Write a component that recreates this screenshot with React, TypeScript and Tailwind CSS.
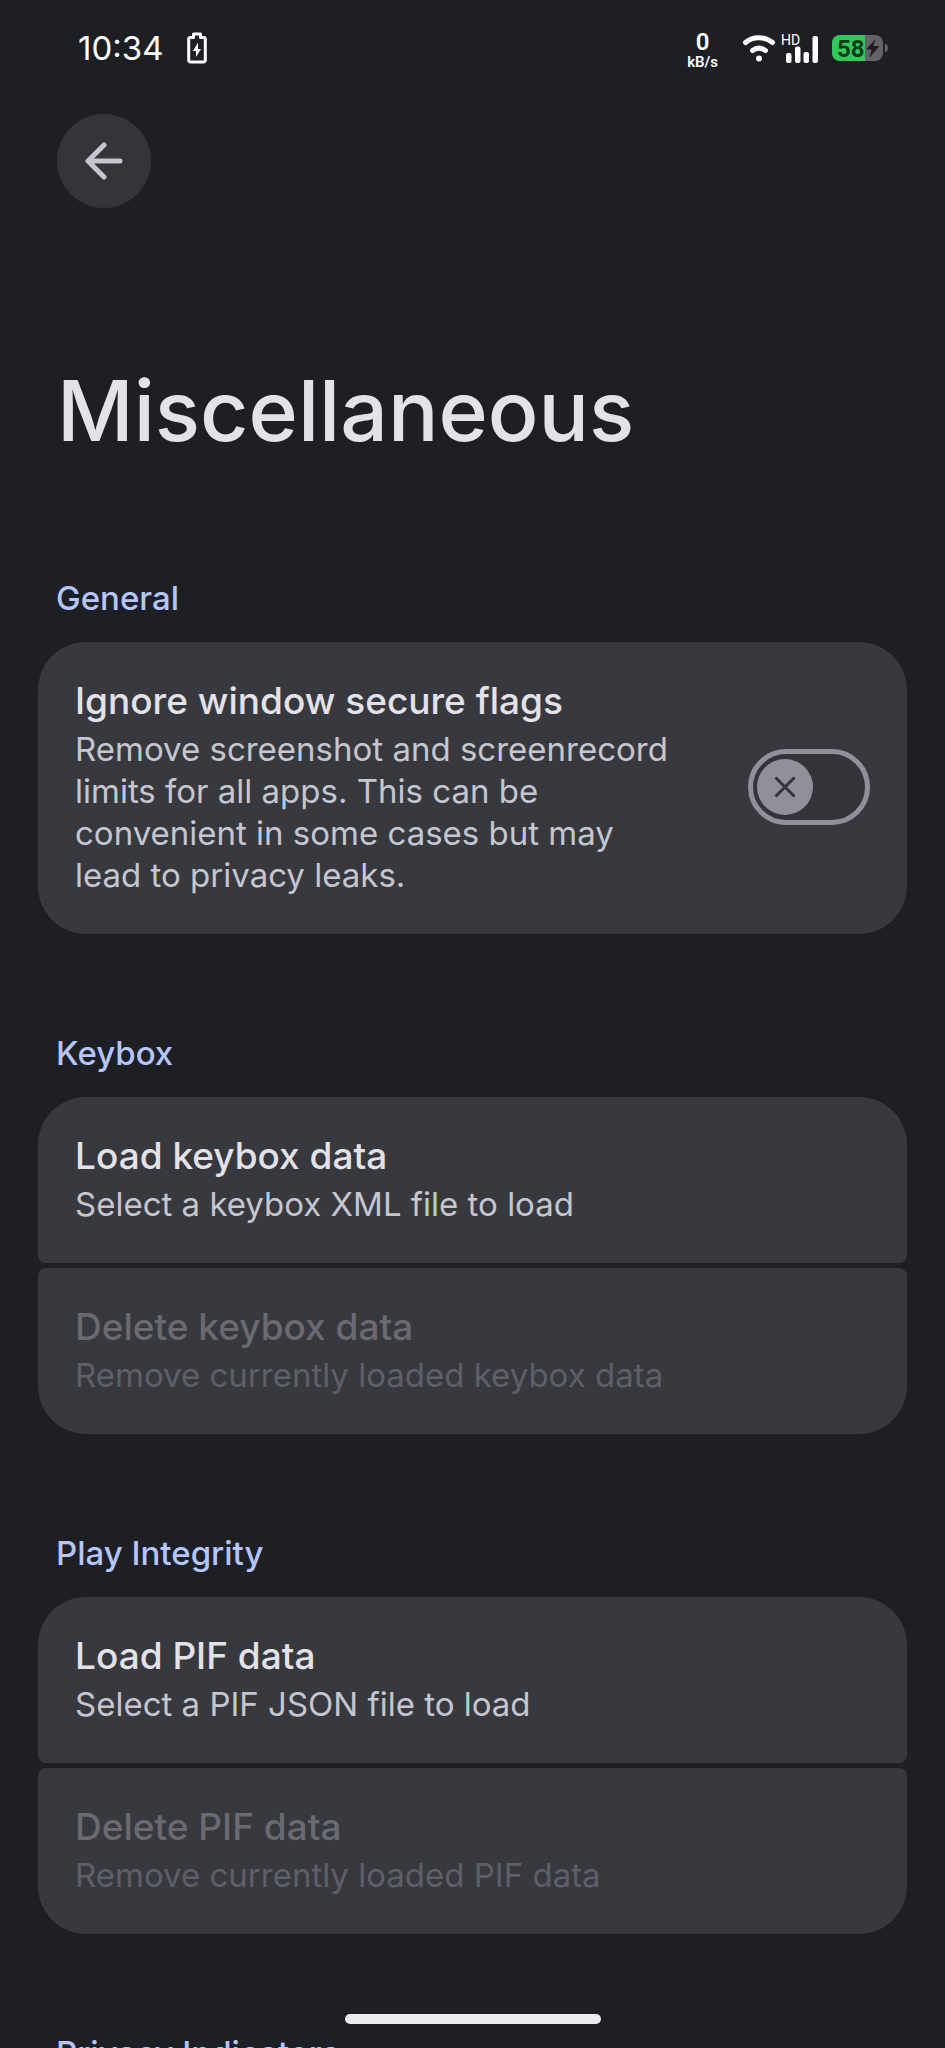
import React from "react";
import { clsx } from "clsx";

type Preference = {
  title: string;
  summary: string;
  disabled?: boolean;
};

const keyboxItems: Preference[] = [
  { title: "Load keybox data", summary: "Select a keybox XML file to load" },
  {
    title: "Delete keybox data",
    summary: "Remove currently loaded keybox data",
    disabled: true,
  },
];

const integrityItems: Preference[] = [
  { title: "Load PIF data", summary: "Select a PIF JSON file to load" },
  {
    title: "Delete PIF data",
    summary: "Remove currently loaded PIF data",
    disabled: true,
  },
];

const StatusBar: React.FC = () => (
  <div className="flex h-24 shrink-0 items-center justify-between pl-[78px] pr-[56px] text-white">
    <div className="flex items-center gap-6">
      <span className="text-[33px] leading-10">10:34</span>
      <svg width="20" height="32" viewBox="0 0 20 32" fill="none">
        <path
          d="M6.5 2h7v3.5h3a1.8 1.8 0 0 1 1.8 1.8v20.9a1.8 1.8 0 0 1-1.8 1.8h-13a1.8 1.8 0 0 1-1.8-1.8V7.3a1.8 1.8 0 0 1 1.8-1.8h3z"
          stroke="currentColor"
          strokeWidth="3"
          strokeLinejoin="round"
        />
        <path d="M11 10.5l-5 8.500h3v6l5-8h-3z" fill="currentColor" />
      </svg>
    </div>

    <div className="flex items-center font-['Roboto',sans-serif]">
      <div className="mr-6 flex flex-col items-center pt-1 font-semibold">
        <span className="text-2xl leading-6">0</span>
        <span className="text-[15px] leading-4">kB/s</span>
      </div>

      {/* Wi-Fi */}
      <svg width="34" height="28" viewBox="0 0 34 28" fill="none" className="mr-1.5">
        <path
          d="M3.5 8.5C11 2.2 23 2.2 30.5 8.5"
          stroke="currentColor"
          strokeWidth="5"
          strokeLinecap="round"
        />
        <path
          d="M10.500 16.500c4-3 9-3 13 0"
          stroke="currentColor"
          strokeWidth="5"
          strokeLinecap="round"
        />
        <circle cx="17" cy="24.500" r="3" fill="currentColor" />
      </svg>

      {/* Mobile signal */}
      <svg width="36" height="30" viewBox="0 0 36 30" className="mr-3.5 overflow-visible">
        <g fill="currentColor">
          <rect x="4" y="20" width="5.5" height="10" rx="2" />
          <rect x="13" y="13.500" width="5.5" height="16.500" rx="2" />
          <rect x="21.500" y="19" width="5.5" height="11" rx="2" />
          <rect x="30.5" y="3" width="5.5" height="27" rx="2" />
          <text x="-1" y="12" fontSize="14">
            HD
          </text>
        </g>
      </svg>

      {/* Battery */}
      <svg width="57" height="28" viewBox="0 0 57 28">
        <defs>
          <clipPath id="battery">
            <rect x="0" y="1" width="51" height="26" rx="8" />
          </clipPath>
        </defs>
        <g clipPath="url(#battery)">
          <rect width="51" height="28" fill="#64636a" />
          <rect width="33" height="28" fill="#34c759" />
        </g>
        <path d="M53 9.500c4 1.500 4 7.500 0 9z" fill="#64636a" />
        <path d="M43.5 5L34 15.5h5.5L37.5 23.5l10-11.5h-6z" fill="#1e1f24" />
        <text x="5" y="22.5" fontSize="24" fontWeight="700" fill="#0c3a1a">
          58
        </text>
      </svg>
    </div>
  </div>
);

const Section: React.FC<{ title: string; children?: React.ReactNode }> = ({
  title,
  children,
}) => (
  <section className="mb-[98px]">
    <h2 className="mb-[23px] px-[18px] text-[33px] font-medium leading-[42px] text-[#b4c5ff]">
      {title}
    </h2>
    <div className="flex flex-col gap-[5px]">{children}</div>
  </section>
);

const PreferenceGroup: React.FC<{ items: Preference[] }> = ({ items }) => (
  <>
    {items.map((item) => (
      <button
        key={item.title}
        type="button"
        disabled={item.disabled}
        className="rounded-lg bg-[#38393f] px-[37px] pb-[38px] pt-9 text-left first:rounded-t-[48px] last:rounded-b-[48px]"
      >
        <span
          className={clsx(
            "block text-[37px] font-medium leading-[46px]",
            item.disabled ? "text-[#6a6a70]" : "text-[#e3e2e9]"
          )}
        >
          {item.title}
        </span>
        <span
          className={clsx(
            "mt-1 block text-[33px] leading-[42px]",
            item.disabled ? "text-[#5e5f68]" : "text-[#c5c6d0]"
          )}
        >
          {item.summary}
        </span>
      </button>
    ))}
  </>
);

const App: React.FC = () => {
  const [ignoreFlags, setIgnoreFlags] = React.useState(false);

  return (
    <div className="relative flex h-screen flex-col overflow-hidden bg-[#1e1f24] font-['Inter',sans-serif]">
      <StatusBar />

      <header className="shrink-0 px-[57px] pt-[18px]">
        <button
          type="button"
          aria-label="Back"
          className="flex size-[94px] items-center justify-center rounded-full bg-[#343539] text-[#c5c6d0]"
        >
          <svg width="38" height="38" viewBox="0 0 38 38" fill="none">
            <path
              d="M35 19H4M19 3L3 19l16 16"
              stroke="currentColor"
              strokeWidth="5"
              strokeLinecap="round"
              strokeLinejoin="round"
            />
          </svg>
        </button>
        <h1 className="mb-[113px] mt-[150px] text-[84px] font-medium leading-[106px] text-[#e3e2e9]">
          Miscellaneous
        </h1>
      </header>

      <main className="px-[38px]">
        <Section title="General">
          <label className="flex items-center justify-between rounded-[48px] bg-[#38393f] px-[37px] pb-[38px] pt-9">
            <span className="max-w-[600px]">
              <span className="block text-[37px] font-medium leading-[46px] text-[#e3e2e9]">
                Ignore window secure flags
              </span>
              <span className="mt-1 block text-[33px] leading-[42px] text-[#c5c6d0]">
                Remove screenshot and screenrecord limits for all apps. This can
                be convenient in some cases but may lead to privacy leaks.
              </span>
            </span>
            <input
              type="checkbox"
              role="switch"
              className="peer sr-only"
              checked={ignoreFlags}
              onChange={(e) => setIgnoreFlags(e.target.checked)}
            />
            <span className="flex h-[76px] w-[122px] shrink-0 items-center rounded-full border-5 border-[#90909a] bg-[#33343a] px-1 peer-checked:justify-end">
              <span className="flex size-14 items-center justify-center rounded-full bg-[#90909a]">
                <svg width="22" height="22" viewBox="0 0 22 22">
                  <path d="M1.5 1.5l19 19M20.5 1.5l-19 19" stroke="#33343a" strokeWidth="3" />
                </svg>
              </span>
            </span>
          </label>
        </Section>

        <Section title="Keybox">
          <PreferenceGroup items={keyboxItems} />
        </Section>

        <Section title="Play Integrity">
          <PreferenceGroup items={integrityItems} />
        </Section>

        <Section title="Privacy Indicators" />
      </main>

      {/* Gesture bar */}
      <div className="absolute bottom-6 left-1/2 h-2.5 w-64 -translate-x-1/2 rounded-full bg-[#ececec]" />
    </div>
  );
};

export default App;
